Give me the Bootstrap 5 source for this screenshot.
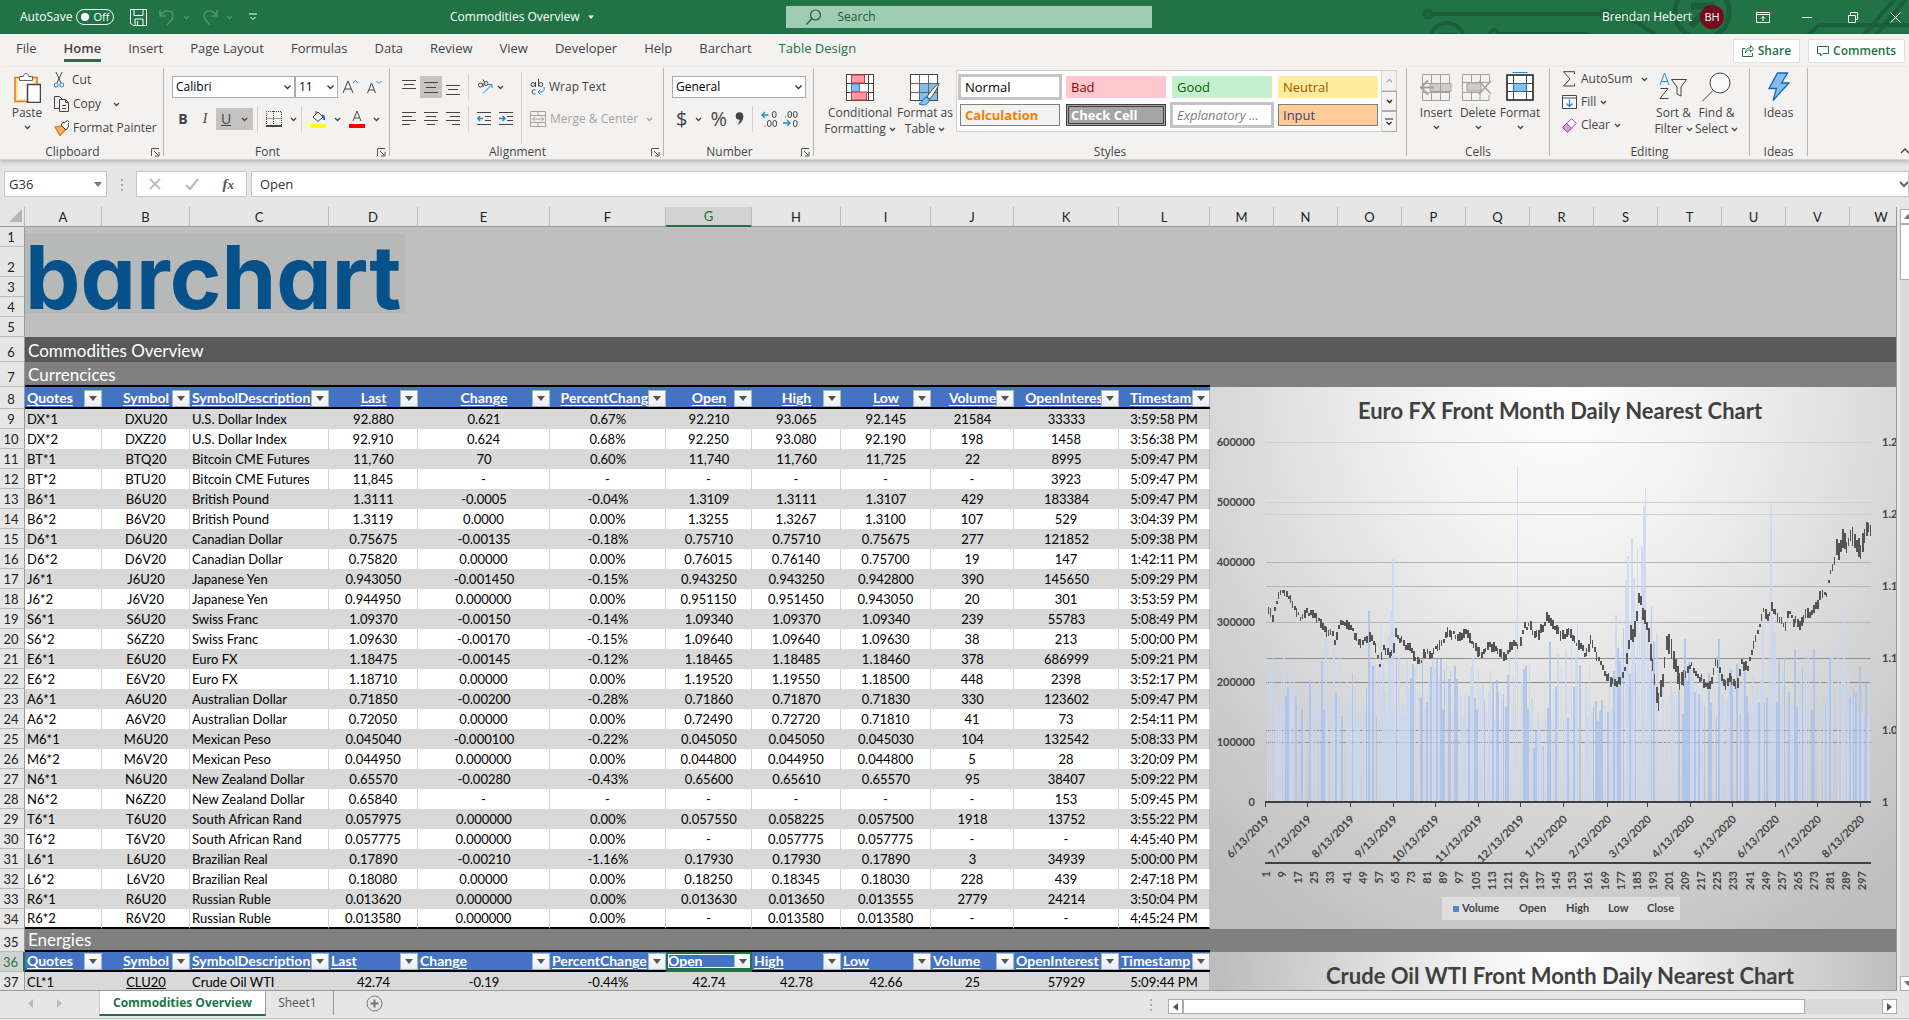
<!DOCTYPE html>
<html lang="en">
<head>
<meta charset="utf-8">
<meta name="viewport" content="width=device-width, initial-scale=1">
<title>Commodities Overview</title>
<link rel="stylesheet" href="https://cdn.jsdelivr.net/npm/bootstrap@5.3.0/dist/css/bootstrap.min.css">
<style>
:root{--xl:#217346;--ink:#444;--line:#c6c6c6}
body{font:12px/16px "Open Sans","Noto Sans",sans-serif;color:var(--ink);background:#e6e6e6;height:100vh;overflow:hidden}
button{font:inherit;color:inherit;background:none;border:0;padding:0}
svg{display:block;flex:none}
.s{fill:none;stroke:#444;stroke-width:1}
.b{stroke:#1e8bcd}
/* title bar */
.titlebar{background:var(--xl);color:#fff;height:34px;position:relative;overflow:hidden}
.titlebar>*{position:relative}
.titlebar .circuit{position:absolute;right:0;top:0}
.side{flex:1 1 0;min-width:0}
.side.wide{flex-basis:36px}
.switch{width:38px;height:16px;border:1px solid #fff;border-radius:8px;font-size:11px;line-height:14px}
.knob{width:8px;height:8px;border-radius:50%;background:#fff}
.searchbox{width:366px;height:22px;background:#9fcdb3}
.searchbox input{background:none;border:0;outline:0;color:#185c37;width:280px;font:inherit;padding:0}
.searchbox input::placeholder{color:#185c37;opacity:1}
.avatar{width:24px;height:24px;border-radius:50%;background:#750b1c;font-size:11px}
/* tabs */
.tabs{background:#f3f2f1;height:33px}
#tabs{gap:27px}
.tabs a{color:var(--ink);text-decoration:none;font-size:13px;line-height:18px;padding-bottom:2px;border-bottom:3px solid transparent}
.tabs a.active{font-weight:600;border-color:var(--xl)}
.tabs a.ctx{color:var(--xl)}
.pill{background:#fff;border:1px solid #e1dfdd;border-radius:2px;height:24px;color:var(--xl);font-weight:600}
/* ribbon */
.ribbon{background:#f3f2f1;height:93px;border-bottom:1px solid #d5d3d1;box-shadow:0 2px 4px #0003;position:relative}
.grp{border-right:1px solid #b9b7b5;height:88px;margin-top:1px;flex:none}
.grp .body{height:76px}
.grp .cap{height:16px;line-height:16px;padding-right:18px;position:relative;text-align:center}
.grp .cap svg{position:absolute;right:3px;top:4px}
.grp .cap.full{padding-right:0}
.big{text-align:center}
.big svg{margin:0 auto}
.big .ic{height:33px}
.down{display:flex;align-items:center;justify-content:center;gap:3px}
.down svg{margin:0}
.stack{gap:8px;padding-top:4px}
.stack button{height:16px}
.tight{gap:7px;padding-top:3px}
.rows{gap:10px}
.w-paste{width:38px}.w-cf{width:68px}.w-ft{width:62px}.w-cell{width:42px}.w-sf{width:43px}.w-sum{width:90px}
.bi{width:22px;font-size:14px}
.bu{width:37px;font-size:14px}
.on{background:#c6c4c2}
.vr1{width:1px;height:26px;background:#d2d0ce}
.vr2{width:1px;height:72px;background:#d2d0ce}
.t22{height:22px}
.xsel{appearance:none;height:22px;border:1px solid #ababab;border-radius:0;background:#fff url("data:image/svg+xml,%3Csvg xmlns='http://www.w3.org/2000/svg' width='7' height='5'%3E%3Cpath d='M.5 .5l3 3 3-3' fill='none' stroke='%23333' stroke-width='1.3'/%3E%3C/svg%3E") no-repeat right 3px center;padding:0 3px;color:#000;font:inherit}
.w-fn{width:123px}.w-fs{width:43px}.w-nf{width:134px}
.gwrap{padding-top:2px}
.gallery{background:#fff;border:1px solid #d2d0ce;height:62px;padding:5px 3px;display:grid;grid-template-columns:repeat(4,100px);gap:6px}
.sty{height:22px;line-height:20px;padding:0 4px;text-align:left;font-size:13px;border:1px solid transparent;white-space:nowrap;overflow:hidden}
.ringed{outline:3px solid #c6c4c2;outline-offset:-1px}
.st-normal{color:#000}
.st-bad{background:#ffc7ce;color:#9c0006}
.st-good{background:#c6efce;color:#006100}
.st-neutral{background:#ffeb9c;color:#9c5700}
.st-calc{background:#f2f2f2;color:#fa7d00;border-color:#7f7f7f}
.st-check{background:#a5a5a5;color:#fff;border:3px double #3f3f3f;line-height:16px;padding:0 2px}
.st-expl{color:#7f7f7f}
.st-input{background:#fc9;color:#3f3f76;border-color:#7f7f7f}
.gscroll{width:15px}
.gscroll button{flex:1;border:1px solid #ababab;border-left:0;display:flex;align-items:center;justify-content:center;color:#222}
.gscroll .off{color:#aaa;border-color:#d2d0ce}
.dim{color:#a6a4a2}
.flip{transform:rotate(180deg)}
/* formula bar */
.fbar{height:27px;margin-top:11px}
.fbox{background:#fff;border:1px solid var(--line);height:26px}
.fbox input{border:0;outline:0;padding:0;color:#333;font:13px "Open Sans","Noto Sans",sans-serif;background:none;width:100%}
.w-name{width:103px}.w-dots{width:29px}.w-fx{width:111px}
.fx{font:italic 700 15px/16px "Liberation Serif",serif;color:#555}
/* sheet */
.sheet{flex:1 1 0;min-height:0;margin-top:9px}
.gridwrap{flex:1 1 0;min-width:0;overflow:hidden;border-right:1px solid #999;border-bottom:1px solid #999}
.grid{table-layout:fixed;width:calc(100% + 17px);border-collapse:separate;border-spacing:0;font:13px/18px Lato,"Noto Sans",sans-serif;color:#000}
.grid td,.grid th{padding:0 2px 1px;vertical-align:bottom;white-space:nowrap;overflow:hidden;position:relative;font-weight:400;text-align:center}
.grid thead th{height:20px;border-right:1px solid #bbb;border-bottom:1px solid #999;background:#e6e6e6;color:#222;padding-bottom:0}
.grid thead th.sel{background:#d2d2d2;color:var(--xl);border-bottom:2px solid var(--xl)}
.grid tbody th{background:#e6e6e6;border-right:1px solid #999;border-bottom:1px solid #bbb;color:#222;padding:0 2px 0 0}
.grid tbody th.sel{background:#d2d2d2;color:var(--xl);border-right:2px solid var(--xl)}
.grid td.l{text-align:left}
.grid tr.odd td{background:#d9d9d9}
.grid tr.even td{background:#fff;border-right:1px solid #d4d4d4}
.grid td.last{border-right:1px solid #bbb}
.grid tr.bot td{border-bottom:2px solid #000;padding-bottom:0}
.grid tr.hd td{background:#4472c4;color:#fff;font-size:14px;font-weight:700;text-decoration:underline;text-underline-offset:2px;border-bottom:2px solid #000;padding-bottom:0}
.grid td.sec{color:#fff;font-size:17px;line-height:21px;text-align:left;padding-left:3px;background:#808080}
.grid td.dark{background:#595959}
.grid td.rule{border-bottom:2px solid #000;padding-bottom:0}
.grid td.logo{background:#bfbfbf;text-align:left;padding:0;vertical-align:top}
.brand{background:#b6b9b8;margin-top:7px;width:380px;height:79px}
.brand text{font:700 88px Inter,Lato,sans-serif;font-feature-settings:"cv11"}
.grid td.chart{vertical-align:top}
.chart svg{width:100%}
.flt{position:absolute;right:0;bottom:0;width:18px;height:17px;border:1px solid #a9b4c6;background:linear-gradient(#fff,#e9edf3);display:flex;align-items:center;justify-content:center}
.pick{position:absolute;inset:0;border:2px solid var(--xl);box-shadow:inset 0 0 0 1px #fff;pointer-events:none}
.grid tr.hd td.picked{border-bottom-color:var(--xl)}
.r-n>th,.r-n>td,.r-36 th{height:20px}.r-2 th{height:30px}.r-6 th,.r-7 th{height:25px}.r-8 th{height:22px}.r-35 th{height:23px}
.vbar{width:12px;padding:2px 0 0 3px;flex:none;overflow:hidden}
.vbar .track{width:16px;background:#dadada}
.vbar button,.vthumb{border:1px solid #ababab;background:#fff;display:flex;align-items:center;justify-content:center}
.vbar button{height:15px}
.vthumb{height:56px}
/* bottom */
.foot{height:28px;border-bottom:1px solid #c6c6c6}
.foot a{text-decoration:none;color:#555;line-height:24px}
.foot a.cur{background:#fff;color:var(--xl);font-weight:700;border-bottom:2px solid var(--xl);height:25px;padding:0 13px;border-right:1px solid #999;border-left:1px solid #ccc}
.w-nav{width:99px}
.tabsep{background:#999;height:24px;width:1px}
.hbar{width:729px;height:15px;background:#dadada}
.hbar button{width:15px;border:1px solid #ababab;background:#fff;display:flex;align-items:center;justify-content:center}
.hthumb{width:622px;border:1px solid #ababab;background:#fff}
.status{height:1px}
</style>
</head>
<body class="d-flex flex-column">

<svg width="0" height="0" class="position-absolute" aria-hidden="true">
  <symbol id="chev" viewBox="0 0 7 5"><path d="M1 1l2.500 2.500L6 1" fill="none" stroke="currentColor" stroke-width="1.300"/></symbol>
  <symbol id="tri" viewBox="0 0 8 5"><path d="M0 0h8L4 5z" fill="currentColor"/></symbol>
  <symbol id="launch" viewBox="0 0 9 9"><path d="M.5 8V.5H8M3 3l4.500 4.500M8 4v4H4" fill="none" stroke="#555"/></symbol>
</svg>

<header class="titlebar d-flex align-items-center flex-shrink-0">
  <svg class="circuit" width="520" height="34" fill="none" stroke="#1b5f39" stroke-width="4"><circle cx="39" cy="14" r="3.500"/><path d="M43 14H212"/><circle cx="216" cy="14" r="3.500"/><path d="M219 15h18l30 20M108 34h90l12 3"/><circle cx="105" cy="34" r="4"/><circle cx="58" cy="40" r="17"/><path d="M50 35h16v14" stroke-width="5"/><circle cx="313" cy="12" r="27" stroke-width="5"/><path d="M302 6h20v20M322 6l-20 20" stroke-width="7"/><path d="M418 36l12-11h90M486 36L520-4M474 36L508-4"/></svg>
  <div class="side wide d-flex align-items-center ps-3">
    <span class="ms-1">AutoSave</span>
    <button class="switch d-flex align-items-center justify-content-between px-1 ms-1" aria-label="AutoSave off"><span class="knob"></span><span>Off</span></button>
    <button class="ms-3" aria-label="Save"><svg width="17" height="17" fill="none" stroke="#fff"><path d="M.5 .5h16v16H3l-2.500-2.500zM4 .5v6h9v-6M5 16v-6h8v6M7.500 12v4"/></svg></button>
    <button class="ms-2 ps-1" aria-label="Undo"><svg width="16" height="17" fill="none" stroke="#4f9670" stroke-width="1.500"><path d="M1 1v6h6M1.500 6.500C5 0 14 1 14 7c0 4-4 6-6 9"/></svg></button>
    <svg class="ms-2" width="7" height="5" color="#4f9670"><use href="#chev"/></svg>
    <button class="ms-2 ps-1" aria-label="Redo"><svg width="16" height="17" fill="none" stroke="#4f9670" stroke-width="1.500"><path d="M15 1v6H9M14.500 6.500C11 0 2 1 2 7c0 4 4 6 6 9"/></svg></button>
    <svg class="ms-2" width="7" height="5" color="#4f9670"><use href="#chev"/></svg>
    <button class="ms-3" aria-label="Customize toolbar"><svg width="8" height="8" fill="none" stroke="#fff"><path d="M0 1h8M1.500 4L4 6.500 6.500 4"/></svg></button>
    <span class="ms-auto me-2">Commodities Overview</span>
    <svg width="6" height="4" viewBox="0 0 8 5" color="#fff"><use href="#tri" width="8" height="5"/></svg>
    <span class="px-5"></span><span class="px-5"></span>
  </div>
  <label class="searchbox d-flex align-items-center ps-3">
    <svg class="ms-1 me-3" width="16" height="16" fill="none" stroke="#185c37" stroke-width="1.200"><circle cx="9.500" cy="6" r="5"/><path d="M6 9.500L.5 15.500"/></svg>
    <input type="text" placeholder="Search" aria-label="Search">
  </label>
  <div class="side d-flex align-items-center justify-content-end pe-2">
    <span class="me-2">Brendan Hebert</span>
    <span class="avatar d-flex align-items-center justify-content-center">BH</span>
    <button class="ms-4" aria-label="Ribbon display options"><svg class="ms-2" width="14" height="11" fill="none" stroke="#fff"><path d="M.5 .5h13v10H.5zM.5 2.500h13M7 9V4.500M5 6.500l2-2 2 2"/></svg></button>
    <button class="ms-4" aria-label="Minimize"><svg class="ms-2" width="10" height="11" stroke="#fff"><path d="M0 5.500h10"/></svg></button>
    <button class="ms-4" aria-label="Restore"><svg class="ms-2 ps-1" width="14" height="11" fill="none" stroke="#fff"><path d="M.5 3.500h7v7h-7zM2.500 3V.5h7v7H8"/></svg></button>
    <button class="ms-4" aria-label="Close"><svg class="ms-2" width="11" height="11" stroke="#fff"><path d="M.5 .5l10 10M10.500 .5l-10 10"/></svg></button>
  </div>
</header>

<nav class="tabs d-flex align-items-center ps-3 flex-shrink-0">
  <div class="d-flex" id="tabs"></div>
  <div class="ms-auto d-flex gap-2 pe-1">
    <button class="pill d-flex align-items-center px-2 gap-1"><svg width="12" height="13" fill="none" stroke="#217346"><path d="M3.500 4.500h-3v8h10V9M3.500 9c0-4 2-5 5-5V1.500L11.500 5 8.500 8V6c-2 0-4 0-5 3z"/></svg>Share</button>
    <button class="pill d-flex align-items-center px-2 gap-1"><svg width="12" height="12" fill="none" stroke="#217346"><path d="M.5 1.500h11v7H6L3.500 11V8.500h-3z"/></svg>Comments</button>
  </div>
</nav>

<section class="ribbon d-flex flex-shrink-0" aria-label="Ribbon">
  <div class="grp" style="width:164px">
    <div class="body d-flex align-items-start ps-2">
      <button class="big w-paste pt-1"><span class="ic d-block"><svg width="28" height="31"><path d="M2 5.500h22v24H2z" fill="#ffe29b" stroke="#e07b1a" stroke-width="1.500"/><path d="M5 8h16v19H5z" fill="#fafafa"/><path d="M6.500 8.500V4.500h4c0-4 5-4 5 0h4v4z" fill="#fff" stroke="#666"/><path d="M14.500 12.500h13v18h-13z" fill="#fff" stroke="#444" stroke-width="1.500"/></svg></span>Paste<svg class="mt-1" width="7" height="5"><use href="#chev"/></svg></button>
      <div class="d-flex flex-column stack ps-2 align-items-start">
        <button class="d-flex gap-2"><svg width="10" height="16" class="s"><path d="M2 0l5 11M8 0L3 11"/><circle cx="2.200" cy="13" r="2" class="b"/><circle cx="7.800" cy="13" r="2" class="b"/></svg>Cut</button>
        <button class="d-flex align-items-center gap-1"><svg width="15" height="16" class="s"><path d="M5.500 12.500h-5V.5h5l3 3M5.500 3.500h6l3 3v9h-9zM11.500 3.500v3h3M8 9.500h4M8 12.500h4"/></svg>Copy<svg class="ms-2" width="7" height="5"><use href="#chev"/></svg></button>
        <button class="d-flex gap-1"><svg width="15" height="16"><path d="M1 7l7-1 4 3-6 6.500z" fill="#f6b26b" stroke="#d9730d" stroke-width="1.200"/><path d="M7 5l5 5 3-4-1-1 1.500-3-2-1.500L10 3 9 2z" fill="#fff" stroke="#444"/></svg>Format Painter</button>
      </div>
    </div>
    <div class="cap">Clipboard<svg width="9" height="9"><use href="#launch"/></svg></div>
  </div>

  <div class="grp" style="width:226px">
    <div class="body d-flex flex-column rows ps-2 pt-2">
      <div class="d-flex align-items-center t22">
        <select class="xsel w-fn" aria-label="Font"><option>Calibri</option></select>
        <select class="xsel w-fs" aria-label="Font size"><option>11</option></select>
        <button class="ms-1" aria-label="Increase font size"><svg width="17" height="16" class="s" stroke-width="1.200"><path d="M1 14L6 2l5 12M3 10h6"/><path class="b" d="M11 4l2.500-2.500L16 4"/></svg></button>
        <button class="ms-2" aria-label="Decrease font size"><svg width="15" height="16" class="s" stroke-width="1.200"><path d="M.5 14L4.500 4l4 10M2 11h5"/><path class="b" d="M9.500 2L12 4.500 14.500 2"/></svg></button>
      </div>
      <div class="d-flex align-items-center t22">
        <button class="bi fw-bold">B</button>
        <button class="bi fst-italic" style="font-family:'Liberation Serif',serif">I</button>
        <button class="bu on t22 d-flex align-items-center justify-content-around"><u>U</u><svg width="7" height="5"><use href="#chev"/></svg></button>
        <span class="vr1 ms-1 me-2"></span>
        <button class="d-flex align-items-center gap-2" aria-label="Borders"><svg width="16" height="16" class="s"><path d="M.5 15V.5h15V15M.5 7.500h15M7.500 0v15" stroke-dasharray="1 1"/><path d="M0 15h16" stroke-width="2"/></svg><svg width="7" height="5"><use href="#chev"/></svg></button>
        <span class="vr1 ms-1 me-2"></span>
        <button class="d-flex align-items-center gap-2" aria-label="Fill color"><svg width="16" height="18" class="s"><path d="M3 7l5-5 5 5-5 4.500zM6 4V1"/><path d="M12 5c2 1 2.500 3 2 5" stroke="#1e6fb8" stroke-width="2"/><path d="M0 16h16" stroke="#ff0" stroke-width="4"/></svg><svg width="7" height="5"><use href="#chev"/></svg></button>
        <button class="d-flex align-items-center gap-2 ms-2" aria-label="Font color"><svg width="16" height="18" class="s"><path d="M4 11L8 1l4 10M5.500 8h5"/><path d="M0 16h16" stroke="red" stroke-width="4"/></svg><svg width="7" height="5"><use href="#chev"/></svg></button>
      </div>
    </div>
    <div class="cap">Font<svg width="9" height="9"><use href="#launch"/></svg></div>
  </div>

  <div class="grp" style="width:274px">
    <div class="body d-flex ps-2">
      <div class="d-flex flex-column rows pt-2">
        <div class="d-flex align-items-center t22">
          <button class="px-1" aria-label="Top align"><svg width="14" height="16" class="s"><path d="M0 1.500h14M2 5.500h10M0 9.500h14"/></svg></button>
          <button class="on t22 px-1" aria-label="Middle align"><svg width="14" height="16" class="s"><path d="M0 3.500h14M2 8.500h10M0 13.500h14"/></svg></button>
          <button class="px-1" aria-label="Bottom align"><svg width="14" height="18" class="s"><path d="M0 7.500h14M2 11.500h10M0 16.500h14"/></svg></button>
          <span class="vr1 ms-1 me-2"></span>
          <button class="d-flex align-items-center gap-1" aria-label="Orientation"><svg width="16" height="16" class="s"><circle cx="3.500" cy="6" r="2"/><path d="M5.500 4.500l1 3.500"/><circle cx="9" cy="4.500" r="2"/><path d="M6 .5l2 4"/><path class="b" d="M6 14.500l9-9M11.500 5.500H15V9"/></svg><svg width="7" height="5"><use href="#chev"/></svg></button>
        </div>
        <div class="d-flex align-items-center t22">
          <button class="px-1" aria-label="Align left"><svg width="14" height="15" class="s"><path d="M0 .5h14M0 4.500h10M0 8.500h14M0 12.500h8"/></svg></button>
          <button class="px-1" aria-label="Center"><svg width="14" height="15" class="s"><path d="M0 .5h14M2 4.500h10M0 8.500h14M3 12.500h8"/></svg></button>
          <button class="px-1" aria-label="Align right"><svg width="14" height="15" class="s"><path d="M0 .5h14M4 4.500h10M0 8.500h14M6 12.500h8"/></svg></button>
          <span class="vr1 ms-1 me-2"></span>
          <button aria-label="Decrease indent"><svg width="14" height="15" class="s"><path d="M0 .5h14M8 4.500h6M8 8.500h6M0 12.500h14"/><path class="b" stroke-width="1.500" d="M6 6.500H1M3 4L.7 6.500 3 9"/></svg></button>
          <button class="ms-2" aria-label="Increase indent"><svg width="14" height="15" class="s"><path d="M0 .5h14M8 4.500h6M8 8.500h6M0 12.500h14"/><path class="b" stroke-width="1.500" d="M0 6.500h5.500M3.500 4L6 6.500 3.500 9"/></svg></button>
        </div>
      </div>
      <span class="vr2 ms-2 me-2 mt-1"></span>
      <div class="d-flex flex-column rows pt-2 align-items-start">
        <button class="d-flex align-items-center gap-1 t22"><svg width="15" height="17" class="s"><circle cx="3" cy="5.500" r="2"/><path d="M5.500 3v5M8.500 0v7.500"/><circle cx="10.800" cy="5.500" r="2"/><path d="M5.500 11c-4-2-5 5 0 4"/><path class="b" d="M14 8c1 5-2 5-6 5M10.500 10.500L8 13l2.500 2.500"/></svg>Wrap Text</button>
        <button class="dim d-flex align-items-center gap-1 t22"><svg width="16" height="16" fill="none" stroke="#a6a4a2"><path d="M.5 .5h15v15H.5zM.5 4.500h15M.5 11.500h15M8 0v4M8 12v4M2.500 8h11M5 5.500L2.500 8 5 10.500M11 5.500L13.500 8 11 10.500"/></svg>Merge &amp; Center<svg class="ms-1" width="7" height="5"><use href="#chev"/></svg></button>
      </div>
    </div>
    <div class="cap">Alignment<svg width="9" height="9"><use href="#launch"/></svg></div>
  </div>

  <div class="grp" style="width:150px">
    <div class="body d-flex flex-column rows ps-2 pt-2">
      <select class="xsel w-nf" aria-label="Number format"><option>General</option></select>
      <div class="d-flex align-items-center t22">
        <button class="d-flex align-items-center gap-2 fs-5 ps-1">$<svg width="7" height="5"><use href="#chev"/></svg></button>
        <button class="fs-5 ms-2">%</button>
        <button class="ms-2" aria-label="Comma style"><svg width="9" height="14"><circle cx="4.500" cy="4" r="3.800" fill="#444"/><path d="M8.300 4c0 5-3 8-6.500 9.500C4 11.500 5 9 4.500 6z" fill="#444"/></svg></button>
        <span class="vr1 mx-2"></span>
        <button aria-label="Increase decimal"><svg width="17" height="18" class="s"><path class="b" stroke-width="1.300" d="M7.500 5H1M4 2L1 5l3 3"/><rect x="11.500" y="1.500" width="3.500" height="6" rx="1.700"/><rect x="6.500" y="10.500" width="3.500" height="6" rx="1.700"/><rect x="12" y="10.500" width="3.500" height="6" rx="1.700"/><path d="M3.500 16h1"/></svg></button>
        <button class="ms-1" aria-label="Decrease decimal"><svg width="17" height="18" class="s"><path class="b" stroke-width="1.300" d="M1 13h7M5 10l3 3-3 3"/><rect x="11.500" y="10.500" width="3.500" height="6" rx="1.700"/><rect x="6" y="1.500" width="3.500" height="6" rx="1.700"/><rect x="11.500" y="1.500" width="3.500" height="6" rx="1.700"/><path d="M3 7h1"/></svg></button>
      </div>
    </div>
    <div class="cap">Number<svg width="9" height="9"><use href="#launch"/></svg></div>
  </div>

  <div class="grp" style="width:593px">
    <div class="body d-flex align-items-start ps-2 ms-1">
      <button class="big w-cf pt-1"><span class="ic d-block"><svg width="28" height="30" viewBox="0 -2 28 30"><path d="M.5 .5h27v26H.5zM.5 9.500h27M.5 18.500h27M22.500 .5v26M5.500 .5v26" fill="#fff" stroke="#444"/><path d="M5.500 1h13v8h-13z" fill="#ff9aa2" stroke="#e03131"/><path d="M5.500 18h15v8h-15z" fill="#ff9aa2" stroke="#e03131"/><path d="M5.500 10h8v7.500h-8z" fill="#83beec" stroke="#1e8bcd"/></svg></span>Conditional<span class="down">Formatting<svg width="7" height="5"><use href="#chev"/></svg></span></button>
      <button class="big w-ft pt-1"><span class="ic d-block"><svg width="30" height="34" viewBox="0 -2 30 34"><path d="M.5 .5h27v26H.5z" fill="#fff" stroke="#444"/><path d="M10 10h17v16H10z" fill="#83beec"/><path d="M.5 9.500h27M.5 18.500h27M9.500 .5v26M18.500 .5v26" stroke="#666"/><path d="M29 9c-3 2-10 10-12 14l3 2c3-4 8-11 9-16z" fill="#fff" stroke="#444"/><path d="M16 23c-3 1-3 5-7 7 5 2 11 0 10-5z" fill="#83beec" stroke="#1e6fb8"/></svg></span>Format as<span class="down">Table<svg width="7" height="5"><use href="#chev"/></svg></span></button>
      <div class="gwrap d-flex align-items-start">
        <div class="gallery">
          <button class="sty ringed st-normal">Normal</button>
          <button class="sty st-bad">Bad</button>
          <button class="sty st-good">Good</button>
          <button class="sty st-neutral">Neutral</button>
          <button class="sty fw-bold st-calc">Calculation</button>
          <button class="sty fw-bold st-check">Check Cell</button>
          <button class="sty fst-italic ringed st-expl">Explanatory ...</button>
          <button class="sty st-input">Input</button>
        </div>
        <div class="gscroll d-flex flex-column align-self-stretch">
          <button class="off" aria-label="Scroll up"><svg class="flip" width="7" height="5"><use href="#chev"/></svg></button>
          <button aria-label="Scroll down"><svg width="7" height="5"><use href="#chev"/></svg></button>
          <button aria-label="More styles"><svg width="8" height="8" fill="none" stroke="#222" stroke-width="1.200"><path d="M0 1h8M1.500 4L4 6.500 6.500 4"/></svg></button>
        </div>
      </div>
    </div>
    <div class="cap full">Styles</div>
  </div>

  <div class="grp" style="width:143px">
    <div class="body d-flex align-items-start ps-2">
      <button class="big w-cell pt-1"><span class="ic d-block"><svg width="32" height="30" viewBox="-2 -2 32 30" stroke="#a3a19f"><path d="M.5 .5h27v26H.5zM.5 9.500h27M.5 18.500h27M9.500 .5v26M18.500 .5v26" fill="none"/><path d="M8 9.500h21v8H8z" fill="#cfcdcb"/><path d="M18.500 10v8"/><path d="M12 13.500H0M6 6.500l-7 7 7 7" fill="none" stroke-width="2"/></svg></span>Insert<svg class="mt-1" width="7" height="5"><use href="#chev"/></svg></button>
      <button class="big w-cell pt-1"><span class="ic d-block"><svg width="32" height="30" viewBox="0 -2 32 30" stroke="#a3a19f"><path d="M18 26.500H.5v-8h18M.5 18V.5h27v8H.5M9.500 .5v26M18.500 .5v8M27 21v5.500h-9v-8" fill="none"/><path d="M5 9h14v8H5z" fill="#cfcdcb"/><path d="M17 7l12 13M29 7L17 20" stroke-width="1.500"/></svg></span>Delete<svg class="mt-1" width="7" height="5"><use href="#chev"/></svg></button>
      <button class="big w-cell pt-1"><span class="ic d-block"><svg width="28" height="30" viewBox="0 -2 28 30"><path d="M1 1h26v25H1zM1 9.500h26M1 17.500h26M7.500 1v25M20.500 1v25" fill="#fff" stroke="#444"/><path d="M1 1h26v25H1z" fill="none" stroke="#333" stroke-width="1.500"/><path d="M7.500 9.500h13v8h-13z" fill="#83beec" stroke="#1e6fb8"/><path d="M6.500-1.500h15" stroke="#1e8bcd"/></svg></span>Format<svg class="mt-1" width="7" height="5"><use href="#chev"/></svg></button>
    </div>
    <div class="cap full">Cells</div>
  </div>

  <div class="grp" style="width:200px">
    <div class="body d-flex align-items-start ps-2 ms-1">
      <div class="d-flex flex-column align-items-start stack tight w-sum">
        <button class="d-flex align-items-center gap-1"><svg width="15" height="16" class="s"><path d="M12.500 3V.7H1.500L8 8l-6.500 7h11V12.500"/></svg>AutoSum<svg class="ms-1" width="7" height="5"><use href="#chev"/></svg></button>
        <button class="d-flex align-items-center gap-1"><svg width="15" height="14"><path d="M.5 .5h14v13H.5zM.5 3h14" fill="#fff" stroke="#444"/><path d="M7.500 4.500v7M4.500 8.500l3 3 3-3" fill="none" stroke="#1e8bcd" stroke-width="1.300"/></svg>Fill<svg width="7" height="5"><use href="#chev"/></svg></button>
        <button class="d-flex align-items-center gap-1"><svg width="15" height="15"><path d="M.7 9.500L9.500 .7l4.800 4.600L5.500 14z" fill="#fff" stroke="#a33fb1"/><path d="M.7 9.500l3.800-4 5 4.600-4 4z" fill="#d9a0dd" stroke="#a33fb1"/></svg>Clear<svg width="7" height="5"><use href="#chev"/></svg></button>
      </div>
      <button class="big w-sf pt-1"><span class="ic d-block"><svg width="29" height="33" class="s"><path class="b" d="M1 13L5.500 1 10 13M2.500 9.500h6"/><path d="M1.500 16.500h7.500l-8 10h8.500"/><path d="M12.500 7.500h15L22 15v9l-4-2v-7z"/></svg></span>Sort &amp;<span class="down">Filter<svg width="7" height="5"><use href="#chev"/></svg></span></button>
      <button class="big w-sf pt-1"><span class="ic d-block"><svg width="29" height="32" class="s"><circle cx="18" cy="11" r="10" fill="#fafafa"/><path d="M11 18.500L.5 29"/></svg></span>Find &amp;<span class="down">Select<svg width="7" height="5"><use href="#chev"/></svg></span></button>
    </div>
    <div class="cap full">Editing</div>
  </div>

  <div class="grp" style="width:58px">
    <div class="body">
      <button class="big w-100 pt-1"><span class="ic d-block"><svg width="22" height="30"><path d="M9.500 1h10l-6 10h7.500L5 28.500l3.500-12H1z" fill="#83beec" stroke="#1565b5" stroke-width="1.300"/></svg></span>Ideas</button>
    </div>
    <div class="cap full">Ideas</div>
  </div>
  <button class="ms-auto align-self-end pb-1" aria-label="Collapse ribbon"><svg width="9" height="8" fill="none" stroke="#444" stroke-width="1.300"><path d="M1 6l4-4 4 4"/></svg></button>
</section>

<div class="fbar d-flex flex-shrink-0">
  <div class="fbox w-name d-flex align-items-center ms-1 px-1"><input type="text" value="G36" aria-label="Name box"><svg width="8" height="5" color="#777"><use href="#tri"/></svg></div>
  <div class="w-dots d-flex align-items-center justify-content-center"><svg width="2" height="12" fill="#aaa"><path d="M0 0h2v2H0zM0 5h2v2H0zM0 10h2v2H0z"/></svg></div>
  <div class="fbox w-fx d-flex align-items-center justify-content-between px-2">
    <button class="ms-1" aria-label="Cancel"><svg width="12" height="12" stroke="#bbb" stroke-width="1.800"><path d="M1 1l10 10M11 1L1 11"/></svg></button>
    <button aria-label="Enter"><svg width="14" height="12" fill="none" stroke="#bbb" stroke-width="2.200"><path d="M1 7l4 4 8-10"/></svg></button>
    <button class="fx me-1" aria-label="Insert function">f<small>x</small></button>
  </div>
  <div class="fbox flex-fill d-flex align-items-center ps-2 ms-1"><input type="text" value="Open" aria-label="Formula bar"><svg width="9" height="7" fill="none" stroke="#666" stroke-width="2"><path d="M1 1l4 4 4-4"/></svg></div>
</div>

<main class="sheet d-flex">
  <div class="gridwrap"><table class="grid" id="grid"></table></div>
  <div class="vbar d-flex flex-column">
    <div class="track d-flex flex-column flex-fill">
      <button aria-label="Scroll up"><svg class="flip" width="8" height="5" color="#777"><use href="#tri"/></svg></button>
      <div class="vthumb"></div>
      <button class="mt-auto" aria-label="Scroll down"><svg width="8" height="5" color="#777"><use href="#tri"/></svg></button>
    </div>
  </div>
</main>

<footer class="foot d-flex align-items-start flex-shrink-0">
  <div class="w-nav d-flex align-items-center ps-4 gap-4 pt-2"><svg class="ms-1" width="5" height="9" fill="#bbb"><path d="M5 0v9L0 4.500z"/></svg><svg width="5" height="9" fill="#bbb"><path d="M0 0v9l5-4.500z"/></svg></div>
  <a class="cur" href="#">Commodities Overview</a>
  <a class="ms-2 ps-1 pe-3" href="#">Sheet1</a>
  <span class="tabsep"></span>
  <button class="ms-4 ps-2 pt-1" aria-label="New sheet"><svg width="17" height="17" fill="none" stroke="#777"><circle cx="8.500" cy="8.500" r="7.500"/><path d="M8.500 4.500v8M4.500 8.500h8" stroke-width="2"/></svg></button>
  <svg class="ms-auto mt-2 me-3" width="2" height="12" fill="#aaa"><path d="M0 0h2v2H0zM0 5h2v2H0zM0 10h2v2H0z"/></svg>
  <div class="hbar d-flex mt-2 me-2"><button aria-label="Scroll left"><svg width="5" height="8" fill="#555"><path d="M5 0v8L0 4z"/></svg></button><div class="hthumb"></div><button class="ms-auto" aria-label="Scroll right"><svg width="5" height="8" fill="#555"><path d="M0 0v8l5-4z"/></svg></button></div>
  <span class="pe-1"></span>
</footer>
<div class="status flex-shrink-0"></div>

<script src="https://cdn.jsdelivr.net/npm/bootstrap@5.3.0/dist/js/bootstrap.bundle.min.js"></script>
<script>
document.getElementById('tabs').innerHTML = ['File','Home','Insert','Page Layout','Formulas','Data','Review','View','Developer','Help','Barchart','Table Design']
  .map(t=>`<a href="#" class="${t==='Home'?'active':''}${t==='Table Design'?'ctx':''}">${t}</a>`).join('');

const widths=[25,77,88,139,89,132,116,86,89,90,83,105,91];
const letters='ABCDEFGHIJKLMNOPQRSTUVW'.split('');
const heads=['Quotes','Symbol','SymbolDescription','Last','Change','PercentChange','Open','High','Low','Volume','OpenInterest','Timestamp'];
const data=`DX*1|DXU20|U.S. Dollar Index|92.880|0.621|0.67%|92.210|93.065|92.145|21584|33333|3:59:58 PM
DX*2|DXZ20|U.S. Dollar Index|92.910|0.624|0.68%|92.250|93.080|92.190|198|1458|3:56:38 PM
BT*1|BTQ20|Bitcoin CME Futures|11,760|70|0.60%|11,740|11,760|11,725|22|8995|5:09:47 PM
BT*2|BTU20|Bitcoin CME Futures|11,845|-|-|-|-|-|-|3923|5:09:47 PM
B6*1|B6U20|British Pound|1.3111|-0.0005|-0.04%|1.3109|1.3111|1.3107|429|183384|5:09:47 PM
B6*2|B6V20|British Pound|1.3119|0.0000|0.00%|1.3255|1.3267|1.3100|107|529|3:04:39 PM
D6*1|D6U20|Canadian Dollar|0.75675|-0.00135|-0.18%|0.75710|0.75710|0.75675|277|121852|5:09:38 PM
D6*2|D6V20|Canadian Dollar|0.75820|0.00000|0.00%|0.76015|0.76140|0.75700|19|147|1:42:11 PM
J6*1|J6U20|Japanese Yen|0.943050|-0.001450|-0.15%|0.943250|0.943250|0.942800|390|145650|5:09:29 PM
J6*2|J6V20|Japanese Yen|0.944950|0.000000|0.00%|0.951150|0.951450|0.943050|20|301|3:53:59 PM
S6*1|S6U20|Swiss Franc|1.09370|-0.00150|-0.14%|1.09340|1.09370|1.09340|239|55783|5:08:49 PM
S6*2|S6Z20|Swiss Franc|1.09630|-0.00170|-0.15%|1.09640|1.09640|1.09630|38|213|5:00:00 PM
E6*1|E6U20|Euro FX|1.18475|-0.00145|-0.12%|1.18465|1.18485|1.18460|378|686999|5:09:21 PM
E6*2|E6V20|Euro FX|1.18710|0.00000|0.00%|1.19520|1.19550|1.18500|448|2398|3:52:17 PM
A6*1|A6U20|Australian Dollar|0.71850|-0.00200|-0.28%|0.71860|0.71870|0.71830|330|123602|5:09:47 PM
A6*2|A6V20|Australian Dollar|0.72050|0.00000|0.00%|0.72490|0.72720|0.71810|41|73|2:54:11 PM
M6*1|M6U20|Mexican Peso|0.045040|-0.000100|-0.22%|0.045050|0.045050|0.045030|104|132542|5:08:33 PM
M6*2|M6V20|Mexican Peso|0.044950|0.000000|0.00%|0.044800|0.044950|0.044800|5|28|3:20:09 PM
N6*1|N6U20|New Zealand Dollar|0.65570|-0.00280|-0.43%|0.65600|0.65610|0.65570|95|38407|5:09:22 PM
N6*2|N6Z20|New Zealand Dollar|0.65840|-|-|-|-|-|-|153|5:09:45 PM
T6*1|T6U20|South African Rand|0.057975|0.000000|0.00%|0.057550|0.058225|0.057500|1918|13752|3:55:22 PM
T6*2|T6V20|South African Rand|0.057775|0.000000|0.00%|-|0.057775|0.057775|-|-|4:45:40 PM
L6*1|L6U20|Brazilian Real|0.17890|-0.00210|-1.16%|0.17930|0.17930|0.17890|3|34939|5:00:00 PM
L6*2|L6V20|Brazilian Real|0.18080|0.00000|0.00%|0.18250|0.18345|0.18030|228|439|2:47:18 PM
R6*1|R6U20|Russian Ruble|0.013620|0.000000|0.00%|0.013630|0.013650|0.013555|2779|24214|3:50:04 PM
R6*2|R6V20|Russian Ruble|0.013580|0.000000|0.00%|-|0.013580|0.013580|-|-|4:45:24 PM`.split('\n').map(r=>r.split('|'));
const energy='CL*1|CLU20|Crude Oil WTI|42.74|-0.19|-0.44%|42.74|42.78|42.66|25|57929|5:09:44 PM'.split('|');

/* chart of price bars over volume columns */
const rnd=(s=>()=>(s=(s*16807)%2147483647)/2147483647)(4242);
const bg=(id,r)=>`<defs><radialGradient id="${id}" gradientUnits="userSpaceOnUse" cx="351" cy="0" r="${r}" gradientTransform="translate(351 0) scale(.85 1) translate(-351 0)"><stop offset="0" stop-color="#fff"/><stop offset=".3" stop-color="#f0f0f0"/><stop offset=".6" stop-color="#dadada"/><stop offset="1" stop-color="#bdbdbd"/></radialGradient></defs>`;
function euro(){
  const L=56,R=661,B=415; let s=bg('g1',640)+`<rect width="720" height="542" fill="url(#g1)"/>`;
  for(let i=1;i<=6;i++) s+=`<path d="M${L} ${B-60*i+.5}H${R}" stroke="${i<3?'#8f8f8f':i<5?'#b5b5b5':'#cfcfcf'}"/>`;
  for(let i=1;i<=4;i++) s+=`<path d="M${L} ${B-72*i+.5}H${R}" stroke="${i<3?'#8f8f8f':i<4?'#b5b5b5':'#cfcfcf'}"/>`;
  const peaks={0:153,3:153,29:183,33:169,36:144,56:177,61:192,62:243,120:159,123:182,124:336,153:145,160:137,173:187,176:150,178:222,179:246,181:264,182:224,184:254,186:255,187:296,188:314,189:170,246:185,250:298,251:185,252:170,280:155,283:159,286:191,299:131};
  for(let i=0;i<300;i++){
    const x=Math.round(L+1+i*2.013);
    let v=80+rnd()*65; if(rnd()<.22) v+=rnd()*50; if(i>172&&i<196) v+=20+rnd()*35; if(i>130&&i<138) v=45+rnd()*60;
    const gap=rnd()<.12, dark=rnd()<.4, w=rnd()<.7?2:1;
    if(gap&&!peaks[i]) continue;
    v=peaks[i]||Math.round(v);
    s+=`<rect x="${x}" y="${B-v}" width="${w}" height="${v}" fill="${dark&&!peaks[i]?'#a9c0ea':'#c9d7f0'}" fill-opacity=".8"/>`;
  }
  const k=[[150,725],[160,740],[170,690],[180,665],[195,685],[205,710],[220,745],[232,725],[255,740],[270,770],[280,790],[290,785],[298,820],[310,755],[330,765],[345,805],[360,820],[373,800],[385,825],[396,885],[403,835],[425,855],[428,790],[440,810],[450,820],[462,840],[475,865],[485,880],[495,850],[510,855],[520,830],[535,820],[545,780],[555,790],[570,810],[590,785],[600,815],[620,855],[640,825],[650,830],[660,850],[675,860],[685,820],[705,830],[712,770],[725,770],[745,800],[765,745],[780,765],[797,800],[813,780],[830,820],[850,850],[862,815],[872,845],[885,885],[900,925],[917,945],[930,925],[940,880],[950,790],[958,800],[965,735],[970,670],[978,730],[985,750],[990,790],[998,860],[1005,930],[1012,1000],[1022,930],[1033,800],[1045,870],[1060,940],[1070,915],[1085,885],[1095,920],[1110,930],[1118,955],[1130,930],[1140,870],[1150,920],[1160,940],[1172,925],[1185,945],[1195,880],[1210,900],[1220,830],[1235,780],[1245,720],[1255,750],[1262,700],[1270,730],[1280,750],[1293,770],[1302,720],[1312,755],[1325,760],[1340,730],[1352,735],[1370,680],[1383,670],[1390,620],[1400,580],[1405,530],[1412,540],[1420,500],[1428,540],[1438,480],[1448,530],[1458,545],[1465,500],[1475,470],[1481,480]];
  let j=0;
  for(let i=0;i<300;i++){
    const X=150+i*(1331/299); while(j<k.length-2&&k[j+1][0]<X) j++;
    const t=(X-k[j][0])/(k[j+1][0]-k[j][0]), wild=(X>940&&X<1070)||X>1400;
    const y=(k[j][1]+t*(k[j+1][1]-k[j][1]))/3-17+(rnd()-.5)*5, h=(wild?8:3)+rnd()*(wild?12:7);
    s+=`<rect x="${Math.round(X/2.211-9)-1}" y="${Math.round(y-h/2)}" width="${rnd()<.7?2:1}" height="${Math.round(h)}" fill="#555"/>`;
  }
  s+=`<path d="M${L-1} ${B}H${R}M${L-1} 476H${R}" stroke="#404040" stroke-width="2"/>`;
  s+=`<g font-family="Lato,sans-serif" font-size="11" fill="#444">`;
  for(let i=0;i<=6;i++) s+=`<text x="45" y="${B+4-60*i}" text-anchor="end">${i?i+'00000':0}</text>`;
  ['1','1.0','1.1','1.1','1.2','1.2'].forEach((t,i)=>s+=`<text x="672" y="${B+4-72*i}">${t}</text>`);
  const dx=[56,98,141,184,226,269,311,354,398,438,481,523,566,608,651];
  '6/13/2019 7/13/2019 8/13/2019 9/13/2019 10/13/2019 11/13/2019 12/13/2019 1/13/2020 2/13/2020 3/13/2020 4/13/2020 5/13/2020 6/13/2020 7/13/2020 8/13/2020'.split(' ').forEach((t,i)=>s+=`<path d="M${dx[i]-.5} ${B}v5" stroke="#404040"/><text transform="translate(${dx[i]+4} 433) rotate(-45)" text-anchor="end">${t}</text>`);
  for(let i=0;i<38;i++) s+=`<text transform="translate(${Math.round(60+i*16.12)} 484) rotate(-90)" text-anchor="end">${1+8*i}</text>`;
  s+=`<rect x="232" y="510" width="238" height="23" fill="#dedede"/><rect x="243" y="519" width="6" height="6" fill="#5b84cc"/>`;
  [['Volume',252],['Open',309],['High',356],['Low',398],['Close',437]].forEach(([t,x])=>s+=`<text x="${x}" y="525">${t}</text>`);
  s+=`</g><text x="350" y="32" text-anchor="middle" font-family="Lato,sans-serif" font-weight="700" font-size="22" fill="#404040">Euro FX Front Month Daily Nearest Chart</text>`;
  return `<svg height="542" role="img" aria-label="Euro FX chart">${s}</svg>`;
}
const crude=`<svg height="38" role="img" aria-label="Crude oil chart">${bg('g2',400)}<rect width="720" height="38" fill="url(#g2)"/><text x="350" y="32" text-anchor="middle" font-family="Lato,sans-serif" font-weight="700" font-size="22" fill="#404040">Crude Oil WTI Front Month Daily Nearest Chart</text></svg>`;

const flt=h=>`<button class="flt" aria-label="Filter ${h}"><svg width="8" height="5" color="#555"><use href="#tri"/></svg></button>`;
const cells=r=>r.map((v,i)=>`<td class="${i===0||i===2?'l ':''}${i===11?'last':''}">${v}</td>`).join('');
const num=(n,c='')=>`<th scope="row" class="${c}">${n}</th>`;
let h='<colgroup>'+widths.map(w=>`<col style="width:${w}px">`).join('')+'<col style="width:64px">'.repeat(10)+'<col></colgroup>';
h+='<thead><tr><th aria-label="Select all"><svg class="ms-auto mb-1" width="13" height="13" fill="#b5b5b5"><path d="M13 0v13H0z"/></svg></th>'+letters.map(l=>`<th scope="col" class="${l==='G'?'sel':''}">${l}</th>`).join('')+'</tr></thead><tbody>';
h+=`<tr class="r-n">${num(1)}<td class="logo" colspan="23" rowspan="5"><div class="brand"><svg width="380" height="79" role="img" aria-label="barchart"><text x="0" y="75" fill="#06518a">barchart</text></svg></div></td></tr>`;
h+=`<tr class="r-2">${num(2)}</tr><tr class="r-n">${num(3)}</tr><tr class="r-n">${num(4)}</tr><tr class="r-n">${num(5)}</tr>`;
h+=`<tr class="r-6">${num(6)}<td class="sec dark" colspan="23">Commodities Overview</td></tr>`;
h+=`<tr class="r-7">${num(7)}<td class="sec rule" colspan="12">Currencices</td><td class="sec" colspan="11"></td></tr>`;
h+=`<tr class="hd r-8">${num(8)}`+heads.map((t,i)=>`<td class="${i===0||i===2?'l':''}">${t}${flt(t)}</td>`).join('')+`<td class="chart p-0 border-0" colspan="11" rowspan="27">${euro()}</td></tr>`;
data.forEach((r,i)=>h+=`<tr class="r-n ${i%2?'even':'odd'} ${i===25?'bot':''}">${num(9+i)}${cells(r)}</tr>`);
h+=`<tr class="r-35">${num(35)}<td class="sec rule" colspan="12">Energies</td><td class="sec" colspan="11"></td></tr>`;
h+=`<tr class="hd r-36">${num(36,'sel')}`+heads.map((t,i)=>`<td class="${i===1?'':'l'} ${i===6?'picked':''}">${t}${flt(t)}${i===6?'<span class="pick"></span>':''}</td>`).join('')+`<td class="chart p-0 border-0" colspan="11" rowspan="2">${crude}</td></tr>`;
h+=`<tr class="r-n odd">${num(37)}${cells(energy).replace('CLU20','<u>CLU20</u>')}</tr></tbody>`;
document.getElementById('grid').innerHTML=h;
</script>
</body>
</html>
